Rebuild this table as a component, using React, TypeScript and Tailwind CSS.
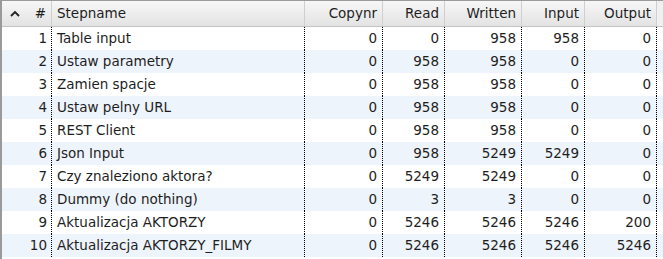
import React from "react";

const rows: [number, string, number, number, number, number, number][] = [
  [1, "Table input", 0, 0, 958, 958, 0],
  [2, "Ustaw parametry", 0, 958, 958, 0, 0],
  [3, "Zamien spacje", 0, 958, 958, 0, 0],
  [4, "Ustaw pelny URL", 0, 958, 958, 0, 0],
  [5, "REST Client", 0, 958, 958, 0, 0],
  [6, "Json Input", 0, 958, 5249, 5249, 0],
  [7, "Czy znaleziono aktora?", 0, 5249, 5249, 0, 0],
  [8, "Dummy (do nothing)", 0, 3, 3, 0, 0],
  [9, "Aktualizacja AKTORZY", 0, 5246, 5246, 5246, 200],
  [10, "Aktualizacja AKTORZY_FILMY", 0, 5246, 5246, 5246, 5246],
];

const dotted = "border-r border-dotted border-r-black";

export default function App() {
  return (
    <div
      className="w-[663px] h-[259px] overflow-hidden bg-white text-[13.5px] text-[#1e1e1e] flex flex-col border-l-2 border-t border-[#9a9a9a]"
      style={{ fontFamily: '"DejaVu Sans", sans-serif' }}
    >
      <div className="flex h-[26px] shrink-0 bg-gradient-to-b from-[#f7f7f7] to-[#e3e3e3] border-b border-[#c4c4c4] leading-[25px]">
        <div className="w-[50px] flex items-center justify-between pl-[8px] pr-[5px] border-r border-[#cfcfcf]">
          <svg width="10" height="7" viewBox="0 0 10 7" className="mt-[-1px]">
            <path d="M1 6 L5 2 L9 6" fill="none" stroke="#222" strokeWidth="1.8" />
          </svg>
          <span>#</span>
        </div>
        <div className="w-[253px] pl-[5px] border-r border-[#cfcfcf]">Stepname</div>
        <div className="w-[78px] text-right pr-[5px] border-r border-[#cfcfcf]">Copynr</div>
        <div className="w-[62px] text-right pr-[5px] border-r border-[#cfcfcf]">Read</div>
        <div className="w-[77px] text-right pr-[5px] border-r border-[#cfcfcf]">Written</div>
        <div className="w-[63px] text-right pr-[5px] border-r border-[#cfcfcf]">Input</div>
        <div className="w-[72px] text-right pr-[5px] border-r border-[#cfcfcf]">Output</div>
        <div className="flex-1 bg-[#f0f0f0]" />
      </div>
      {rows.map((r, i) => (
        <div
          key={r[0]}
          className={`flex h-[23px] shrink-0 leading-[23px] ${i % 2 === 1 ? "bg-[#eef4fc]" : "bg-white"}`}
        >
          <div className={`w-[50px] text-right pr-[4px] ${dotted}`}>{r[0]}</div>
          <div className={`w-[253px] pl-[5px] ${dotted}`}>{r[1]}</div>
          <div className={`w-[78px] text-right pr-[5px] ${dotted}`}>{r[2]}</div>
          <div className={`w-[62px] text-right pr-[5px] ${dotted}`}>{r[3]}</div>
          <div className={`w-[77px] text-right pr-[5px] ${dotted}`}>{r[4]}</div>
          <div className={`w-[63px] text-right pr-[5px] ${dotted}`}>{r[5]}</div>
          <div className={`w-[72px] text-right pr-[5px] ${dotted}`}>{r[6]}</div>
          <div className="flex-1" />
        </div>
      ))}
    </div>
  );
}
